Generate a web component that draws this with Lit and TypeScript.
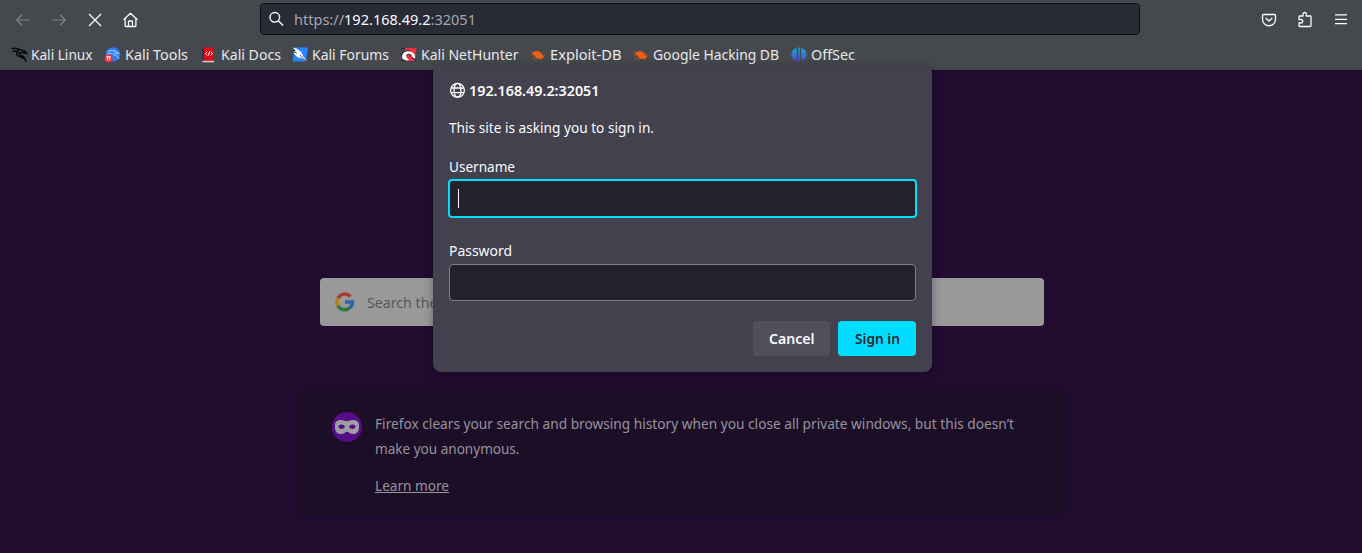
import { LitElement, html, css, svg } from "lit";
import { customElement } from "lit/decorators.js";

const bugIcon = svg`<path d="M2.500 5.500l2-.7 1-.9 1.300.5 1.700-.2 2.300 1.600 1.500 2.200 1.500 1.300.6 1-1.200.2-1.200 1.300-1.800.1-2.500-.4-2-1.200-1.200-1.700-1.700-1z" fill="#f06010"/><path d="M.3 4.300l3.500 1.200M1.500 11.700L5.500 10.500M8.300 3.300l.5 2.200M5 12.800l3-1.300M13.200 5.500l-2 1.200M13 8.800l2.200-.8M.3 8l3.300-.2M10 12l2 1.300" stroke="#cf5517" stroke-width=".7"/>`;

const bookmarks = [
  { label: "Kali Linux", step: 94, width: 61.5, icon: svg`<path d="M.5 1.800c3-1 6.500-.5 9 1.200M1.500 4.800c2.500-1.400 5-1.300 7 .2M9 2.500c2 .8 3.500 1.300 5.500 2.200l1 1.800-3-.9-2.800.1C7.800 6 8 8 10 8.600c2.500.6 4.500 2 4.800 6.400M7.800 4.500C4.800 5 5 8.500 8.500 9.500c2.200.6 3.600 1 4.300 2.300" fill="none" stroke="#08090b" stroke-width="1.500"/>` },
  { label: "Kali Tools", step: 96, width: 63, icon: svg`<circle cx="8" cy="7.500" r="7.200" fill="#2d7df6"/><path d="M2.500 4.500c4-1.600 7-.9 9.800.6l1.500 1.500-3.500-.5C7.800 6 8 8 10.500 8.500c2 .4 3 1.500 3.200 3.500M2 7.300c2.500-1.400 4-1.100 5.500-.6" fill="none" stroke="#b9d7ff" stroke-width=".9"/><circle cx="3.600" cy="11.400" r="4" fill="#ef2f3c"/><path d="M1.500 9.800h4.300M2.600 9.800v3.500M4.700 9.800v3.500" stroke="#fff" stroke-width="1"/>` },
  { label: "Kali Docs", step: 91, width: 60, icon: svg`<path d="M1 .4h2.500v13H1z" fill="#283863"/><path d="M3 .4h10v13.400H3z" fill="#dc0d12"/><path d="M1.500 13.800H13v1.500H1.500z" fill="#d7ccd1"/><path d="M6.200 4.800L4.500 6.600l1.700 1.700M9.800 4.800l1.700 1.800-1.700 1.700M7.300 8.600l1.400-4" fill="none" stroke="#fff" stroke-width="1"/>` },
  { label: "Kali Forums", step: 109, width: 77, icon: svg`<path d="M2 .4h14l-2 14H.8z" fill="#2785ff"/><path d="M.3.500l4.200 1.100 4.800 3.500 2 4.300 3.900 5.200-5.500-3.300-4.300-1L1.500 6l2 .3L.3 2.500l2.700.7z" fill="#fff"/><path d="M.3 1l3 2.500L1 3.500l4 3M8 8l6.500 7" stroke="#252a34" stroke-width=".8" fill="none"/>` },
  { label: "Kali NetHunter", step: 129, width: 97.5, icon: svg`<path d="M4 1L15.500.8 13.500 14H4z" fill="#ef3042"/><path d="M1 9.500C1.500 5 5.500 3 9 4.300c4.500 1.500 6 4.700 4.800 7.200L10.500 10C11.500 7.500 8 6 6 7.600c-1.600 1.500-.3 3.800 2.500 5.400l-4 .5-3-1.800z" fill="#fff"/><path d="M0 .8l4 1.300M.6 8.500C1.500 4.800 5.500 2.800 9 4M5.500 8.500C7 6.500 10 7 10.300 9.500l4.500 4.500M.5 13.500h4" fill="none" stroke="#1d2026" stroke-width="1"/>` },
  { label: "Exploit-DB", step: 103, width: 71.5, icon: bugIcon },
  { label: "Google Hacking DB", step: 158, width: 126, icon: bugIcon },
  { label: "OffSec", step: 65, width: 44, icon: svg`<defs><linearGradient id="os" x1="0" y1="0" x2="0" y2="1"><stop offset="0" stop-color="#15a6c2"/><stop offset=".5" stop-color="#3478d5"/><stop offset="1" stop-color="#6433bd"/></linearGradient></defs><path d="M5.800 1v13C2 13.500.5 10.500.5 7.500S2.500 1.500 5.800 1zM10.200 1v13c3.800-.5 5.300-3.500 5.300-6.500S13.500 1.500 10.200 1zM7.200.5h1.600v15H7.200z" fill="url(#os)"/>` },
];

@customElement("app-root")
export class AppRoot extends LitElement {
  static styles = css`
    :host { display: block; position: relative; width: 1362px; height: 553px; overflow: hidden; background: #210c30; color: #fbfbfe; font: 15px/20px "Noto Sans", sans-serif; }
    * { box-sizing: border-box; }
    svg { display: block; flex: none; overflow: visible; }
    .chrome { height: 71px; background: #45484d; border-bottom: 1px solid #101015; }
    .nav { display: flex; height: 39px; padding: 0 13px 0 15px; align-items: center; }
    .nav > svg { margin-right: 20px; }
    .nav > svg:last-child { margin-right: 0; }
    .url { display: flex; flex: none; align-items: center; width: 880px; height: 32px; margin: -1px 121px 0 101px; padding-left: 8px; border: 1px solid #0d0e12; border-radius: 4px; background: #282a36; gap: 9px; }
    .bookmarks { display: flex; height: 31px; padding-left: 10.500px; align-items: center; }
    .bookmark { display: flex; align-items: center; gap: 4px; color: #e8e8ea; }
    .bookmark .text { margin-top: -1px; }
    .search { display: flex; align-items: center; width: 724px; height: 48px; margin: 207px 0 0 320px; padding-left: 15px; border-radius: 4px; background: #99999a; color: #57575e; gap: 12px; }
    .info { display: flex; gap: 12px; width: 768px; height: 126px; margin: 64px 0 0 298px; padding: 21px 34px 0 34px; border-radius: 8px; background: #1d0e28; color: #96939b; }
    .mask { margin-top: 1px; }
    .copy { display: flex; flex-direction: column; align-items: flex-start; gap: 5px; padding-top: 2px; }
    .learn { margin-top: 12px; height: 18px; border-bottom: 1px solid #96939b; }
    .dialog { position: absolute; left: 433px; top: 65px; width: 499px; height: 307px; padding: 15px 15px 0; border-radius: 8px; background: #42414d; box-shadow: 0 2px 10px rgba(10,5,18,.35); }
    .title { display: flex; align-items: center; gap: 4px; padding-left: 1px; font-weight: 600; height: 20px; }
    .message { margin-top: 17px; height: 20px; padding-left: 1px; }
    .label { height: 20px; margin-top: 19px; padding-left: .5px; }
    .input { width: 467px; height: 37px; margin: 4px 0 0 1px; border: 1px solid #807f89; border-radius: 4px; background: #23222b; }
    .focused { display: flex; align-items: center; width: 469px; height: 39px; margin: 3px 0 0; padding-left: 8px; border: 2px solid #00ddff; }
    .caret { width: 1px; height: 19px; background: #fff; }
    .password { margin-top: 22px; }
    .buttons { display: flex; gap: 8px; justify-content: flex-end; margin: 20px 1px 0 0; font-weight: 600; }
    .button { display: grid; place-items: center; width: 77px; height: 35px; padding-bottom: 1px; border-radius: 4px; background: #504f5b; }
    .primary { width: 78px; background: #00ddff; color: #2b2a33; }
  `;

  private line(text: string, width: number) {
    return html`<svg class="text" width=${width} height="20"><text x="0" y="15.500" textLength=${width} lengthAdjust="spacingAndGlyphs" fill="currentColor">${text}</text></svg>`;
  }

  render() {
    return html`
      <header class="chrome">
        <nav class="nav">
          <svg width="16" height="16" fill="none" stroke="#83858a" stroke-width="1.200"><path d="M15 8H1.700M7 2.800L1.700 8 7 13.200"/></svg>
          <svg width="16" height="16" fill="none" stroke="#83858a" stroke-width="1.200"><path d="M1 8h13.300M9 2.800L14.300 8 9 13.200"/></svg>
          <svg width="16" height="16" fill="none" stroke="#fbfbfe" stroke-width="1.300"><path d="M2 2l12 12M14 2L2 14"/></svg>
          <svg width="16" height="16" fill="none" stroke="#fbfbfe" stroke-width="1.300" stroke-linejoin="round"><path d="M.6 7.800L7.500 1.200 14.400 7.800M2.100 6.500v7.200q0 .8.8.8h9.200q.8 0 .8-.8V6.500M5.500 14.500V9.800q0-.8.800-.8h2.400q.8 0 .8.800v4.700"/></svg>
          <div class="url">
            <svg width="16" height="16" fill="none" stroke="#fbfbfe" stroke-width="1.400"><circle cx="5.800" cy="6.300" r="4.800"/><path d="M9.300 9.800l4.800 4.800"/></svg>
            <svg width="184" height="20"><text y="15.500" x="0" textLength="182" lengthAdjust="spacingAndGlyphs" fill="#a6a7ad">https://<tspan fill="#fbfbfe">192.168.49.2</tspan>:32051</text></svg>
          </div>
          <svg width="16" height="16" fill="none" stroke="#fbfbfe" stroke-width="1.300" stroke-linejoin="round"><path d="M2.500 2.500h11q1 0 1 1V7c0 9-13 9-13 0V3.500q0-1 1-1zM4.700 6L8 9l3.300-3"/></svg>
          <svg width="16" height="16" fill="none" stroke="#fbfbfe" stroke-width="1.300" stroke-linejoin="round"><path d="M2 7.500V4.800q0-.8.800-.8H6V2.200c0-2.300 3.300-2.300 3.300 0V4h3.900q.8 0 .8.800v8.900q0 .8-.8.800H2.800q-.8 0-.8-.8V11h2c2.300 0 2.300-3.500 0-3.500z"/></svg>
          <svg width="16" height="16" stroke="#fbfbfe" stroke-width="1.200"><path d="M2 2.900h12M2 7.400h12M2 11.600h12"/></svg>
        </nav>
        <div class="bookmarks">
          ${bookmarks.map((b) => html`<div class="bookmark" style="width:${b.step}px"><svg width="16" height="16" fill="none">${b.icon}</svg>${this.line(b.label, b.width)}</div>`)}
        </div>
      </header>
      <div class="search">
        <svg width="20" height="20" viewBox="0 0 20 20" fill="none" stroke-width="3.500"><path d="M3 6.300A7.500 7.500 0 0 1 15.400 4.600" stroke="#a83c37"/><path d="M3 13.700A7.500 7.500 0 0 1 3 6.300" stroke="#ac8119"/><path d="M15 15.600A7.500 7.500 0 0 1 3 13.700" stroke="#2c7943"/><path d="M10 10h7.500a7.500 7.500 0 0 1-2.500 5.600" stroke="#355fac"/></svg>
        ${this.line("Search the web", 102)}
      </div>
      <section class="info">
        <svg class="mask" width="31" height="31"><circle cx="15" cy="15" r="15" fill="#550d88"/><path fill="#a09ca5" fill-rule="evenodd" d="M3 13c0-3.400 2.500-5 5.800-5 3 0 4.700 1.300 6.200 1.300S18.200 8 21.200 8C24.500 8 27 9.600 27 13v2.500c0 4-2.300 6.500-5.800 6.500-3.200 0-4.500-2.300-6.200-2.300S12 22 8.800 22C5.300 22 3 19.500 3 15.500zM6.300 14.500c1.300 3.300 5 3.300 6.700.300-1.700-2.900-5.200-3-6.700-.3zm10.700.3c1.700 3 5.400 3 6.700-.3-1.500-2.700-5-2.600-6.700.3z"/></svg>
        <div class="copy">
          ${this.line("Firefox clears your search and browsing history when you close all private windows, but this doesn’t", 639)}
          ${this.line("make you anonymous.", 144.5)}
          <div class="learn">${this.line("Learn more", 74)}</div>
        </div>
      </section>
      <div class="dialog" role="dialog">
        <div class="title"><svg width="16" height="16" fill="none" stroke="#fbfbfe" stroke-width="1.300"><circle cx="8.500" cy="8.300" r="6.900"/><ellipse cx="8.500" cy="8.300" rx="3.500" ry="6.900"/><path d="M2 6h13M2 10.600h13"/></svg>${this.line("192.168.49.2:32051", 130.5)}</div>
        <div class="message">${this.line("This site is asking you to sign in.", 205)}</div>
        <div class="label">${this.line("Username", 66)}</div>
        <div class="input focused"><div class="caret"></div></div>
        <div class="label password">${this.line("Password", 63)}</div>
        <div class="input"></div>
        <div class="buttons"><div class="button">${this.line("Cancel", 45.5)}</div><div class="button primary">${this.line("Sign in", 45)}</div></div>
      </div>`;
  }
}
